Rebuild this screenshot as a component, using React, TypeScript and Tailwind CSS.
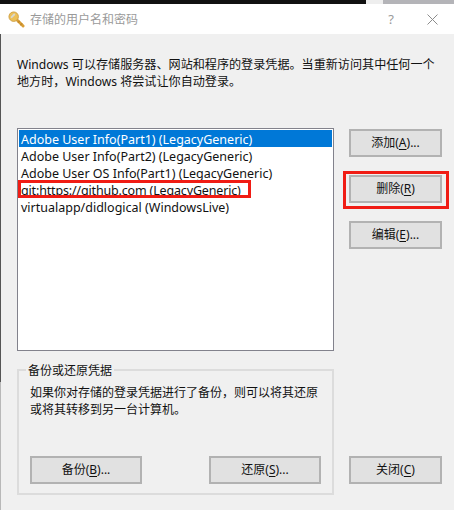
import type { ReactNode } from "react";

const FONT = "font-['Noto_Sans','Noto_Sans_CJK_SC',sans-serif]";

const ENTRIES = [
  "Adobe User Info(Part1) (LegacyGeneric)",
  "Adobe User Info(Part2) (LegacyGeneric)",
  "Adobe User OS Info(Part1) (LegacyGeneric)",
  "git:https://github.com (LegacyGeneric)",
  "virtualapp/didlogical (WindowsLive)",
];

function KeyIcon() {
  return (
    <svg width="17" height="17" viewBox="0 0 18 18" className="shrink-0">
      <path d="M8 8l8 8" stroke="#d99f38" strokeWidth="3" strokeLinecap="round" />
      <path d="M13 15l2-2M10.5 12.5l2-2" stroke="#c48a2a" strokeWidth="1.5" />
      <circle cx="6" cy="6" r="5" fill="#ecc05a" stroke="#cf9f42" strokeWidth="1" />
      <path d="M3.8 6.5l2.8-2.8" stroke="#d8d8d0" strokeWidth="2" strokeLinecap="round" />
    </svg>
  );
}

function Btn({ label, mnemonic, suffix = "", className }: { label: string; mnemonic: string; suffix?: string; className: string }) {
  return (
    <button type="button" className={`h-[28px] shrink-0 border-2 border-[#b2b2b2] bg-[#e1e1e1] text-[12px] leading-none text-[#111] ${className}`}>
      {label}(<span className="underline underline-offset-2">{mnemonic}</span>){suffix}
    </button>
  );
}

function RedBox({ className }: { className: string }) {
  return <div className={`pointer-events-none absolute border-[3px] border-[#f01c14] ${className}`} />;
}

function Row({ children, tight }: { children: ReactNode; tight: boolean }) {
  return <div className={`h-[17px] whitespace-nowrap pl-[2px] leading-[19px] ${tight ? "tracking-[-0.16px]" : ""}`}>{children}</div>;
}

export default function App() {
  return (
    <div className={`flex h-[510px] w-[454px] flex-col overflow-hidden bg-[#f0f0f0] text-[12px] text-[#111] ${FONT}`}>
      <div className="flex h-[4px] shrink-0">
        <div className="w-[366px] bg-[#111]" />
        <div className="w-[17px] bg-[#eeeeee]" />
        <div className="flex-1 bg-[#b4b4b8]" />
      </div>

      <div className="flex h-[30px] shrink-0 items-center bg-white pl-[8px] pt-[1px]">
        <KeyIcon />
        <span className="ml-[5px] text-[12px] text-[#9a9a9a]">存储的用户名和密码</span>
        <span className="ml-auto text-[13px] text-[#9a9a9a]">?</span>
        <svg width="11" height="11" viewBox="0 0 11 11" className="ml-[33px] mr-[16px]">
          <path d="M0.5 0.5l10 10M10.5 0.5l-10 10" stroke="#8c8c8c" strokeWidth="1" fill="none" />
        </svg>
      </div>

      <div className="flex flex-1">
        <div className="flex w-px shrink-0 flex-col">
          <div className="h-[348px] bg-[#555]" />
          <div className="flex-1 bg-[#b8b8b8]" />
        </div>

        <div className="flex flex-1 flex-col pl-[16px] pt-[22px]">
          <p className="w-[425px] text-[12.1px] leading-[17px]">
            Windows 可以存储服务器、网站和程序的登录凭据。当重新访问其中任何一个地方时，Windows 将尝试让你自动登录。
          </p>

          <div className="mt-[38px] flex">
            <div className="flex w-[317px] shrink-0 flex-col">
              <div className="relative h-[223px] border border-[#82828c] bg-white p-[1px] text-[12.5px]">
                {ENTRIES.map((entry, i) => (
                  <div key={entry} className={i === 0 ? "bg-[#0078d7] text-white" : ""}>
                    <Row tight={i === 3}>{entry}</Row>
                  </div>
                ))}
                <RedBox className="left-0 top-[51px] h-[18px] w-[233px]" />
              </div>

              <fieldset className="relative mt-[18px] h-[126px] border-2 border-[#dcdcdc] px-[11px]">
                <span className="absolute left-[7px] top-[-8px] bg-[#f0f0f0] px-[2px] leading-[15px]">备份或还原凭据</span>
                <p className="mt-[13px] text-[12px] leading-[17px]">
                  如果你对存储的登录凭据进行了备份，则可以将其还原
                  <br />
                  或将其转移到另一台计算机。
                </p>
                <div className="mt-[38px] flex justify-between">
                  <Btn label="备份" mnemonic="B" suffix="..." className="w-[112px]" />
                  <Btn label="还原" mnemonic="S" suffix="..." className="w-[112px]" />
                </div>
              </fieldset>
            </div>

            <div className="ml-[15px] flex w-[93px] shrink-0 flex-col">
              <Btn label="添加" mnemonic="A" suffix="..." className="mt-[1px] w-full" />
              <div className="relative mt-[18px]">
                <Btn label="删除" mnemonic="R" className="w-full" />
                <RedBox className="left-[-6px] top-[-4px] h-[38px] w-[106px]" />
              </div>
              <Btn label="编辑" mnemonic="E" suffix="..." className="mt-[18px] w-full" />
              <Btn label="关闭" mnemonic="C" className="mt-[207px] w-full" />
            </div>
          </div>
        </div>
      </div>
    </div>
  );
}
